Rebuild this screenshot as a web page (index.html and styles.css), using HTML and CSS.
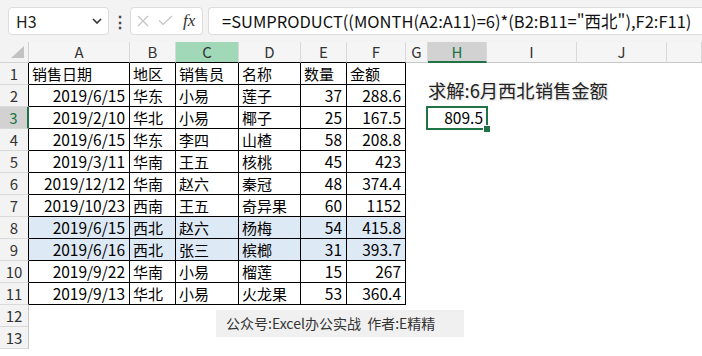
FILE: index.html
```html
<!DOCTYPE html>
<html lang="zh-CN">
<head>
<meta charset="utf-8">
<title>SUMPRODUCT</title>
<link rel="stylesheet" href="styles.css">
</head>
<body>
<div class="toolbar">
  <div class="namebox"><span>H3</span><svg width="10" height="6" viewBox="0 0 10 6"><polyline points="1,1 5,5 9,1" fill="none" stroke="#333" stroke-width="1.6"/></svg></div>
  <div class="dots">⋮</div>
  <div class="fxbox">
    <svg width="12" height="12" viewBox="0 0 12 12"><path d="M1 1L11 11M11 1L1 11" stroke="#c4c4c4" stroke-width="1.2" fill="none"/></svg>
    <svg width="15" height="11" viewBox="0 0 15 11"><polyline points="1,5.5 5,9.5 14,1" fill="none" stroke="#c4c4c4" stroke-width="1.2"/></svg>
    <span class="fx">fx</span>
  </div>
  <div class="formula">=SUMPRODUCT((MONTH(A2:A11)=6)*(B2:B11="西北"),F2:F11)</div>
</div>
<div class="sheet">
  <div class="corner"><svg width="14" height="13" viewBox="0 0 14 13"><polygon points="13,0 13,12 0,12" fill="#c2c2c2"/></svg></div>
  <div class="ch hb">A</div><div class="ch hb">B</div><div class="ch hb csel">C</div><div class="ch hb">D</div><div class="ch hb">E</div><div class="ch hb">F</div><div class="ch">G</div><div class="ch hsel">H</div><div class="ch">I</div><div class="ch">J</div><div class="ch"></div>

  <div class="rh rt">1</div>
  <div class="c t">销售日期</div><div class="c t">地区</div><div class="c t">销售员</div><div class="c t">名称</div><div class="c t">数量</div><div class="c t">金额</div><div class="c"></div><div class="c"></div><div class="c"></div><div class="c"></div><div class="c"></div>

  <div class="rh rt">2</div>
  <div class="c t n">2019/6/15</div><div class="c t">华东</div><div class="c t">小易</div><div class="c t">莲子</div><div class="c t n">37</div><div class="c t n">288.6</div><div class="c"></div><div class="c title"><span>求解:6月西北销售金额</span></div><div class="c"></div><div class="c"></div><div class="c"></div>

  <div class="rh rt rsel">3</div>
  <div class="c t n">2019/2/10</div><div class="c t">华北</div><div class="c t">小易</div><div class="c t">椰子</div><div class="c t n">25</div><div class="c t n">167.5</div><div class="c"></div><div class="c n active">809.5</div><div class="c"></div><div class="c"></div><div class="c"></div>

  <div class="rh rt">4</div>
  <div class="c t n">2019/6/15</div><div class="c t">华东</div><div class="c t">李四</div><div class="c t">山楂</div><div class="c t n">58</div><div class="c t n">208.8</div><div class="c"></div><div class="c"></div><div class="c"></div><div class="c"></div><div class="c"></div>

  <div class="rh rt">5</div>
  <div class="c t n">2019/3/11</div><div class="c t">华南</div><div class="c t">王五</div><div class="c t">核桃</div><div class="c t n">45</div><div class="c t n">423</div><div class="c"></div><div class="c"></div><div class="c"></div><div class="c"></div><div class="c"></div>

  <div class="rh rt">6</div>
  <div class="c t n">2019/12/12</div><div class="c t">华南</div><div class="c t">赵六</div><div class="c t">秦冠</div><div class="c t n">48</div><div class="c t n">374.4</div><div class="c"></div><div class="c"></div><div class="c"></div><div class="c"></div><div class="c"></div>

  <div class="rh rt">7</div>
  <div class="c t n">2019/10/23</div><div class="c t">西南</div><div class="c t">王五</div><div class="c t">奇异果</div><div class="c t n">60</div><div class="c t n">1152</div><div class="c"></div><div class="c"></div><div class="c"></div><div class="c"></div><div class="c"></div>

  <div class="rh rt">8</div>
  <div class="c t n hl">2019/6/15</div><div class="c t hl">西北</div><div class="c t hl">赵六</div><div class="c t hl">杨梅</div><div class="c t n hl">54</div><div class="c t n hl">415.8</div><div class="c"></div><div class="c"></div><div class="c"></div><div class="c"></div><div class="c"></div>

  <div class="rh rt">9</div>
  <div class="c t n hl">2019/6/16</div><div class="c t hl">西北</div><div class="c t hl">张三</div><div class="c t hl">槟榔</div><div class="c t n hl">31</div><div class="c t n hl">393.7</div><div class="c"></div><div class="c"></div><div class="c"></div><div class="c"></div><div class="c"></div>

  <div class="rh rt">10</div>
  <div class="c t n">2019/9/22</div><div class="c t">华南</div><div class="c t">小易</div><div class="c t">榴莲</div><div class="c t n">15</div><div class="c t n">267</div><div class="c"></div><div class="c"></div><div class="c"></div><div class="c"></div><div class="c"></div>

  <div class="rh rt">11</div>
  <div class="c t n">2019/9/13</div><div class="c t">华北</div><div class="c t">小易</div><div class="c t">火龙果</div><div class="c t n">53</div><div class="c t n">360.4</div><div class="c"></div><div class="c"></div><div class="c"></div><div class="c"></div><div class="c"></div>

  <div class="rh">12</div>
  <div class="c"></div><div class="c"></div><div class="c"></div><div class="c"></div><div class="c"></div><div class="c"></div><div class="c"></div><div class="c"></div><div class="c"></div><div class="c"></div><div class="c"></div>

  <div class="rh">13</div>
  <div class="c"></div><div class="c"></div><div class="c"></div><div class="c"></div><div class="c"></div><div class="c"></div><div class="c"></div><div class="c"></div><div class="c"></div><div class="c"></div><div class="c"></div>
</div>
<div class="watermark">公众号:Excel办公实战&nbsp;&nbsp;作者:E精精</div>
</body>
</html>
```
FILE: styles.css
```css
* { box-sizing: border-box; margin: 0; padding: 0; }
body {
  width: 702px;
  height: 356px;
  overflow: hidden;
  position: relative;
  background: #fff;
  color: #000;
  font-family: "Noto Sans CJK SC", "Liberation Sans", sans-serif;
}
.toolbar {
  height: 42px;
  background: #f3f3f3;
  display: flex;
  align-items: center;
  padding-left: 8px;
  padding-bottom: 1px;
}
.namebox {
  width: 101px;
  height: 28px;
  background: #fff;
  border: 1px solid #dcdcdc;
  border-radius: 4px;
  display: flex;
  align-items: center;
  justify-content: space-between;
  padding: 0 6px 0 7px;
  font-size: 16px;
  color: #222;
}
.dots {
  width: 21px;
  text-align: center;
  font-size: 16px;
  font-weight: bold;
  color: #444;
}
.fxbox {
  width: 73px;
  height: 28px;
  background: #fff;
  border: 1px solid #dcdcdc;
  border-radius: 4px;
  display: flex;
  align-items: center;
  gap: 9px;
  padding-left: 6px;
}
.fx {
  font-family: "Liberation Serif", serif;
  font-style: italic;
  font-size: 17px;
  color: #333;
  margin-left: 1px;
}
.formula {
  flex: 1;
  height: 28px;
  margin-left: 5px;
  background: #fff;
  border: 1px solid #dcdcdc;
  border-right: none;
  border-radius: 4px 0 0 4px;
  font-size: 16.5px;
  line-height: 26px;
  padding-left: 13px;
  white-space: nowrap;
  color: #111;
}
.sheet {
  display: grid;
  grid-template-columns: 29px 101px 46px 63px 62px 46px 59px 22px 59px 90px 90px 1fr;
  grid-template-rows: 21px repeat(13, 22px);
}
.corner {
  background: #f3f3f3;
  border-right: 1px solid #d2d2d2;
  border-bottom: 1px solid #d2d2d2;
  display: flex;
  align-items: flex-end;
  justify-content: flex-end;
  padding: 0 3px 3px 0;
}
.ch {
  background: #f5f5f5;
  border-right: 1px solid #d9d9d9;
  border-bottom: 1px solid #c8c8c8;
  font-size: 15px;
  line-height: 20px;
  text-align: center;
  color: #333;
}
.ch.hb { border-bottom-color: #000; }
.ch.csel { background: #a0d8b8; }
.ch.hsel {
  background: #d2d2d2;
  border-bottom: 2px solid #217346;
  color: #217346;
}
.rh {
  background: #f3f3f3;
  border-right: 1px solid #c8c8c8;
  border-bottom: 1px solid #d9d9d9;
  font-size: 15px;
  line-height: 21px;
  text-align: center;
  color: #333;
}
.rh.rt { border-right-color: #000; }
.rh.rsel {
  background: #d2d2d2;
  border-right: 2px solid #217346;
  color: #217346;
}
.c {
  font-size: 15px;
  line-height: 21px;
  padding: 0 3px;
  white-space: nowrap;
}
.c.t {
  border-right: 1px solid #000;
  border-bottom: 1px solid #000;
}
.c.n { text-align: right; padding-right: 4px; font-size: 15.5px; }
.c.hl { background: #dde9f5; }
.title { position: relative; }
.title span {
  position: absolute;
  left: 0;
  top: -7px;
  font-size: 18.3px;
  line-height: 24px;
  color: #222;
  text-shadow: 1px 1px 2px rgba(0, 0, 0, 0.2);
}
.active { position: relative; padding-right: 5px; }
.active::before {
  content: "";
  position: absolute;
  left: -2px;
  top: -1px;
  right: -1px;
  bottom: -1px;
  border: 2px solid #217346;
}
.active::after {
  content: "";
  position: absolute;
  right: -4px;
  bottom: -4px;
  width: 6px;
  height: 6px;
  background: #217346;
  border: 1px solid #fff;
}
.watermark {
  position: absolute;
  left: 216px;
  top: 310px;
  width: 248px;
  height: 27px;
  background: #f0f0f0;
  font-size: 14px;
  line-height: 27px;
  padding-left: 10px;
  color: #333;
  white-space: nowrap;
}
```
